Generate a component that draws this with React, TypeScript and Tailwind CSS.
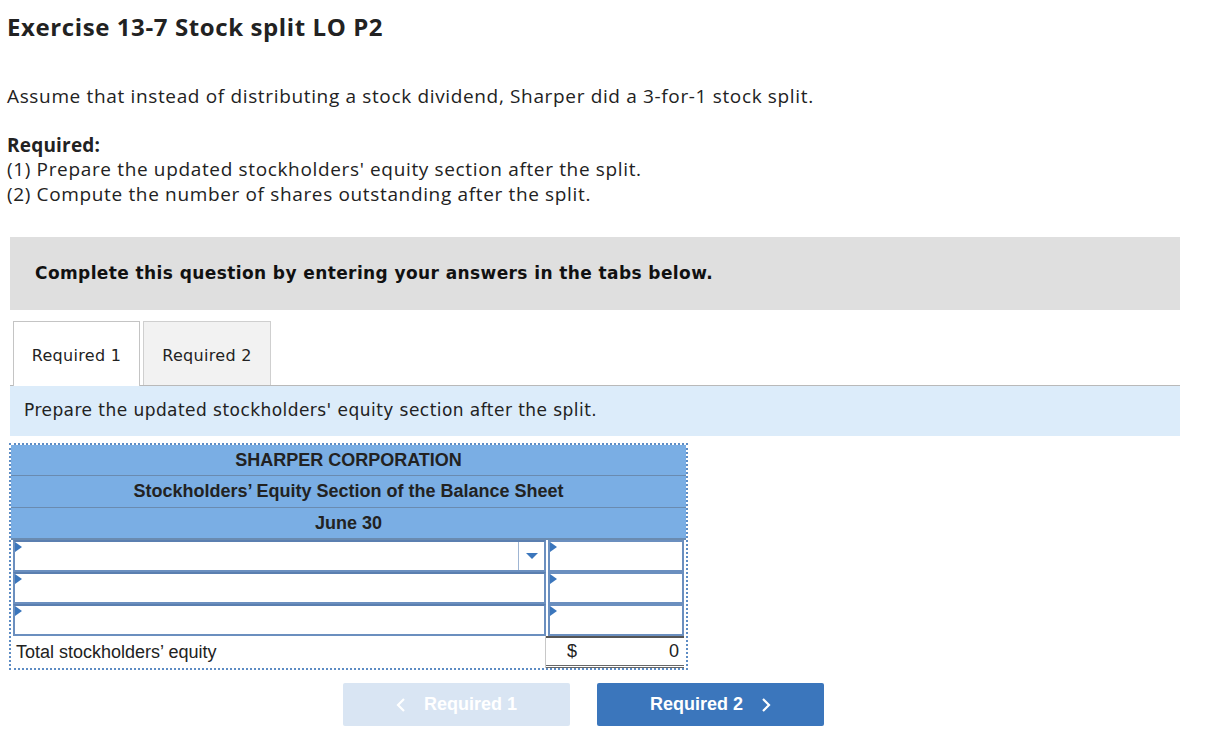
import React from "react";

const proxima = { fontFamily: "'Open Sans', Lato, sans-serif" };
const verdana = { fontFamily: "'DejaVu Sans', Verdana, sans-serif" };
const arial = { fontFamily: "'Liberation Sans', Arial, sans-serif" };

function Marker() {
  return (
    <span className="absolute left-0 top-0 w-0 h-0 border-t-[5px] border-b-[5px] border-l-[7px] border-t-transparent border-b-transparent border-l-[#3b76bc]" />
  );
}

function InputRow({ dropdown }: { dropdown?: boolean }) {
  return (
    <div className="flex h-8">
      <div className="relative flex-1 ml-[2px] border-2 border-[#6b8fbf] border-t-[#5b7fb0] bg-white flex justify-end">
        <Marker />
        {dropdown && (
          <div className="w-[26px] border-l border-[#9fb5d3] flex items-center justify-center">
            <span className="w-0 h-0 border-l-[6px] border-r-[6px] border-t-[6px] border-l-transparent border-r-transparent border-t-[#3b76bc]" />
          </div>
        )}
      </div>
      <div className="relative w-[136px] ml-[2px] mr-[2px] border-2 border-[#6b8fbf] bg-white">
        <Marker />
      </div>
    </div>
  );
}

export default function App() {
  return (
    <div className="w-[1230px] h-[730px] bg-white text-[#222] overflow-hidden relative">
      <h1 className="absolute left-[7px] top-[9px] text-[24px] font-bold text-[#222] tracking-[0.6px]" style={proxima}>
        Exercise 13-7 Stock split LO P2
      </h1>

      <div className="pt-[84px] pl-[7px] text-[19px] leading-[24.5px] tracking-[0.65px]" style={proxima}>
        <p>Assume that instead of distributing a stock dividend, Sharper did a 3-for-1 stock split.</p>
        <p className="mt-[24px] font-bold tracking-[0.2px]">Required:</p>
        <p>(1) Prepare the updated stockholders' equity section after the split.</p>
        <p>(2) Compute the number of shares outstanding after the split.</p>
      </div>

      <div className="ml-[10px] w-[1170px]">
        <div className="mt-[31px] h-[73px] bg-[#dfdfdf] flex items-center pl-[25px]">
          <span className="text-[17px] font-bold text-[#111] tracking-[0.4px]" style={verdana}>
            Complete this question by entering your answers in the tabs below.
          </span>
        </div>

        <div className="mt-[11px] flex items-end h-[65px] border-b border-[#b9b9b9]">
          <div className="ml-[3px] w-[127px] h-[65px] bg-white border border-[#c4c4c4] border-b-0 flex items-center justify-center text-[16px] tracking-[0.3px] -mb-px" style={verdana}>
            <span className="relative top-[2px]">Required 1</span>
          </div>
          <div className="ml-[3px] w-[128px] h-[64px] bg-[#f2f2f2] border border-[#cfcfcf] border-b-0 flex items-center justify-center text-[16px] tracking-[0.3px]" style={verdana}>
            <span className="relative top-[2px]">Required 2</span>
          </div>
        </div>

        <div className="h-[50px] bg-[#dcecfa] flex items-center pl-[14px] text-[17px] tracking-[0.45px] text-[#222]" style={verdana}>
          Prepare the updated stockholders' equity section after the split.
        </div>
      </div>

      <div className="ml-[9px] mt-[7px] w-[679px] border-2 border-dotted border-[#5d8cc4]" style={arial}>
        <div className="bg-[#7aaee4] text-[#222] font-bold text-[18px]">
          <div className="h-[31px] flex items-center justify-center border-b border-[#6a8bb0]">SHARPER CORPORATION</div>
          <div className="h-[32px] flex items-center justify-center border-b border-[#6a8bb0]">Stockholders’ Equity Section of the Balance Sheet</div>
          <div className="h-[32px] flex items-center justify-center border-b-2 border-[#6a8bb0]">June 30</div>
        </div>
        <InputRow dropdown />
        <InputRow />
        <InputRow />
        <div className="flex h-[32px] text-[18px] text-[#222]">
          <div className="flex-1 flex items-center pl-[5px] border-r border-[#c8c8c8]">Total stockholders’ equity</div>
          <div className="w-[138px] mr-[2px] flex items-center justify-between pl-[21px] pr-[5px] border-t-2 border-[#555] border-b-[3px] border-b-[#666] border-double">
            <span>$</span>
            <span>0</span>
          </div>
        </div>
      </div>

      <div className="mt-[13px] ml-[343px] flex gap-[27px]" style={arial}>
        <button className="w-[227px] h-[43px] rounded-[2px] bg-[#d9e5f3] text-white font-bold text-[18px] flex items-center justify-center gap-[18px]">
          <svg width="10" height="16" viewBox="0 0 10 16" fill="none"><path d="M8 2L2 8l6 6" stroke="white" strokeWidth="2.2" /></svg>
          <span>Required 1</span>
        </button>
        <button className="w-[227px] h-[43px] rounded-[2px] bg-[#3b76bc] text-white font-bold text-[18px] flex items-center justify-center gap-[18px]">
          <span>Required 2</span>
          <svg width="10" height="16" viewBox="0 0 10 16" fill="none"><path d="M2 2l6 6-6 6" stroke="white" strokeWidth="2.2" /></svg>
        </button>
      </div>
    </div>
  );
}
